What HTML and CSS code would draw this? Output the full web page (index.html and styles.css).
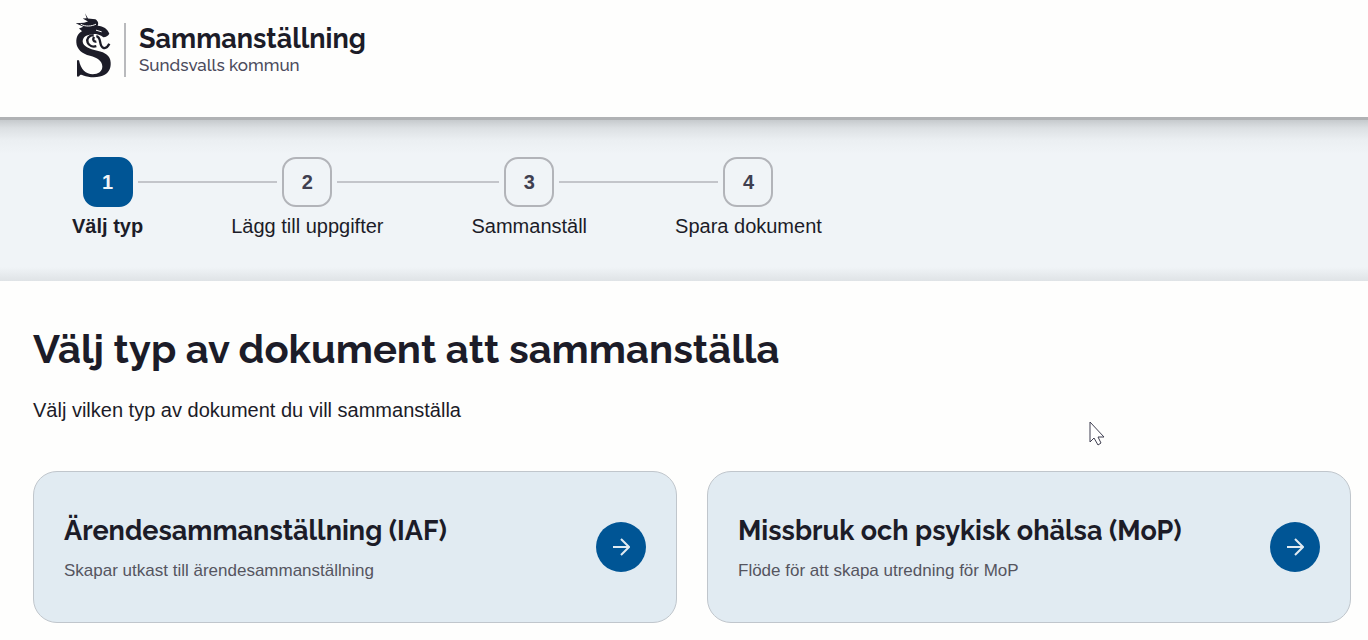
FILE: index.html
```
<!DOCTYPE html>
<html lang="sv">
<head>
    <meta charset="utf-8">
    <meta name="viewport" content="width=device-width, initial-scale=1">
    <title>Sammanställning</title>
    <link rel="stylesheet" href="styles.css">
</head>
<body>
    <header class="header">
        <svg class="logo" viewBox="48 30 105 188" aria-hidden="true">
            <!-- dragon body -->
            <path d="M78 74C57 78 48 94 49 112C50 132 66 146 90 152C112 158 127 168 127 184C127 199 115 207 98 207C78 207 62 192 57 165H51V214H57C60 208 64 208 70 211C90 219 120 218 134 209C148 200 153 188 152 172C151 152 136 142 112 137C88 131 69 124 68 109C68 97 78 89 94 88L112 84L100 68Z"/>
            <!-- head and horns -->
            <path d="M75 24L84 40L106 42C113 46 117 53 113 62C130 63 143 72 148 86C144 93 138 96 130 96C122 91 112 86 98 86L74 88L64 76L57 70L70 65L47 54L72 53L84 49L68 40L80 39Z"/>
            <!-- jaw and tongue -->
            <path class="logo-line" d="M101 90C86 91 79 101 83 112C87 122 98 126 109 123"/>
            <path class="logo-line" d="M102 95C97 104 101 111 109 109M109 93C126 96 115 122 130 128C138 131 144 124 148 116"/>
            <path class="logo-cut" d="M62 57C76 65 94 64 108 57M108 75L125 80"/>
        </svg>
        <div class="brand">
            <span class="brand-name">Sammanställning</span>
            <span class="brand-org">Sundsvalls kommun</span>
        </div>
    </header>

    <nav class="stepper" aria-label="Steg">
        <ol class="steps">
            <li class="step active" aria-current="step">
                <div class="step-row"><span class="step-number">1</span></div>
                <span class="step-label">Välj typ</span>
            </li>
            <li class="step">
                <div class="step-row"><span class="step-number">2</span></div>
                <span class="step-label">Lägg till uppgifter</span>
            </li>
            <li class="step">
                <div class="step-row"><span class="step-number">3</span></div>
                <span class="step-label">Sammanställ</span>
            </li>
            <li class="step">
                <div class="step-row"><span class="step-number">4</span></div>
                <span class="step-label">Spara dokument</span>
            </li>
        </ol>
    </nav>

    <main class="content">
        <h1>Välj typ av dokument att sammanställa</h1>
        <p class="intro">Välj vilken typ av dokument du vill sammanställa</p>

        <div class="cards">
            <a class="card" href="#iaf">
                <div class="card-text">
                    <h2>Ärendesammanställning (IAF)</h2>
                    <p>Skapar utkast till ärendesammanställning</p>
                </div>
                <span class="card-arrow">
                    <svg viewBox="0 0 18 18" aria-hidden="true"><path d="M1 9H17M9 1L17 9L9 17"/></svg>
                </span>
            </a>
            <a class="card" href="#mop">
                <div class="card-text">
                    <h2>Missbruk och psykisk ohälsa (MoP)</h2>
                    <p>Flöde för att skapa utredning för MoP</p>
                </div>
                <span class="card-arrow">
                    <svg viewBox="0 0 18 18" aria-hidden="true"><path d="M1 9H17M9 1L17 9L9 17"/></svg>
                </span>
            </a>
        </div>
    </main>

    <svg class="pointer" viewBox="0 0 16 25" aria-hidden="true">
        <path d="M1 1V21L5 17L9 24L12 22L9 16H15Z"/>
    </svg>
</body>
</html>
```
FILE: styles.css
```
* {
    box-sizing: border-box;
}
body {
    margin: 0;
    font-family: "Liberation Sans", Arial, sans-serif;
    font-size: 20px;
    line-height: 24px;
    color: #1c1c28;
    background: #fefefd;
}
h1, h2, p, ol {
    margin: 0;
    padding: 0;
}

/* Header */
.header {
    display: flex;
    align-items: flex-start;
    padding: 15px 76px 39px;
    border-bottom: 3px solid #b0b2b4;
}
.logo {
    width: 35px;
    height: 63px;
    fill: #1c1c28;
    overflow: visible;
}
.logo-line {
    fill: none;
    stroke: #1c1c28;
    stroke-width: 7;
}
.logo-cut {
    fill: none;
    stroke: #fefefd;
    stroke-width: 3;
}
.brand {
    display: flex;
    flex-direction: column;
    margin: 8px 0 0 13px;
    padding-left: 13px;
    border-left: 2px solid #b9babd;
    font-family: Raleway, Lato, sans-serif;
}
.brand-name {
    font-size: 27px;
    line-height: 31px;
    font-weight: 700;
}
.brand-org {
    font-size: 17px;
    line-height: 23px;
    font-weight: 500;
    color: #4b4b5c;
}

/* Steps */
.stepper {
    padding: 37px 72px 43px;
    background:
        linear-gradient(#c6cacd, #dce0e3 8px, #ebeff2 20px, transparent 34px),
        linear-gradient(to top, #dfe3e6, transparent 14px),
        #f0f4f7;
}
.steps {
    display: flex;
    gap: 88px;
    list-style: none;
}
.step {
    text-align: center;
}
.step-row {
    display: flex;
    align-items: center;
    gap: 5px;
    margin-bottom: 7px;
}
/* connector lines reach halfway into the gap on each side */
.step-row::before,
.step-row::after {
    content: "";
    flex: 1;
    height: 2px;
    background: #c3c5ca;
}
.step-row::before {
    margin-left: -44px;
}
.step-row::after {
    margin-right: -44px;
}
.step:first-child .step-row::before,
.step:last-child .step-row::after {
    visibility: hidden;
}
.step-number {
    display: flex;
    align-items: center;
    justify-content: center;
    width: 50px;
    height: 50px;
    border: 2px solid #b2b4b9;
    border-radius: 14px;
    font-weight: 700;
    color: #3f3f50;
}
.active .step-number {
    background: #005595;
    border-color: #005595;
    color: #f0f4f7;
}
.active .step-label {
    font-weight: 700;
}

/* Content */
.content {
    padding: 44px 17px 17px 33px;
}
h1, h2 {
    font-family: Raleway, Lato, sans-serif;
    font-weight: 700;
}
h1 {
    font-size: 40px;
    line-height: 48px;
}
.intro {
    margin: 25px 0 49px;
}
.cards {
    display: grid;
    grid-template-columns: 1fr 1fr;
    gap: 30px;
}
.card {
    display: flex;
    align-items: center;
    justify-content: space-between;
    padding: 39px 30px;
    border: 1px solid #c0c6cc;
    border-radius: 24px;
    background: #e1ebf2;
    color: #1c1c28;
    text-decoration: none;
}
h2 {
    margin-bottom: 8px;
    font-size: 27px;
    line-height: 40px;
}
.card p {
    font-size: 17px;
    color: #55555f;
}
.card-arrow {
    display: flex;
    align-items: center;
    justify-content: center;
    flex-shrink: 0;
    width: 50px;
    height: 50px;
    border-radius: 50%;
    background: #005595;
}
.card-arrow svg {
    width: 18px;
    height: 18px;
    fill: none;
    stroke: #e1ebf2;
    stroke-width: 2;
}

.pointer {
    position: absolute;
    top: 421px;
    left: 1089px;
    width: 16px;
    height: 25px;
    fill: #fff;
    stroke: #3f3f50;
}
```
